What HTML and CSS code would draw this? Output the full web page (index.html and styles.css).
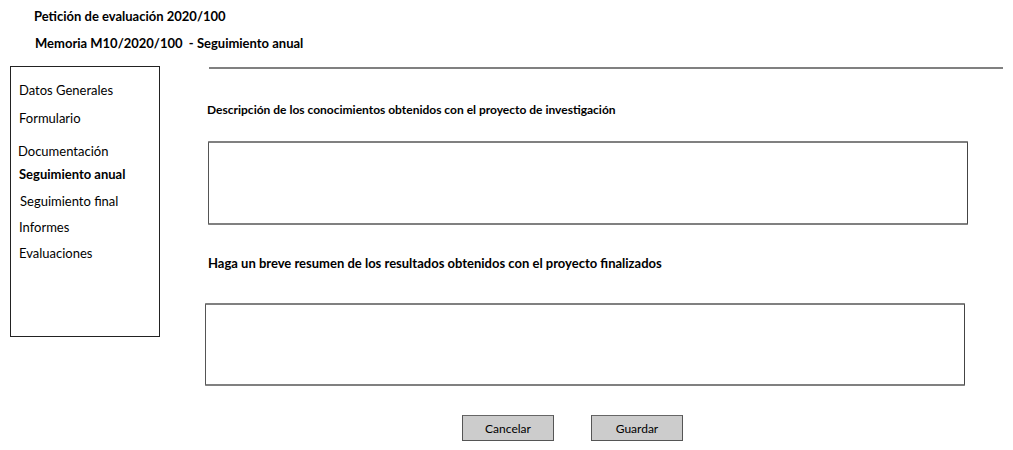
FILE: index.html
```html
<!DOCTYPE html>
<html lang="es">
<head>
<meta charset="utf-8">
<link rel="stylesheet" href="styles.css">
</head>
<body>
<header class="header">
  <div class="title-1">Petición de evaluación 2020/100</div>
  <div class="title-2">Memoria M10/2020/100&nbsp; - Seguimiento anual</div>
</header>
<div class="layout">
  <nav class="sidebar">
    <div class="nav-item nav-datos">Datos Generales</div>
    <div class="nav-item nav-form">Formulario</div>
    <div class="nav-item nav-doc">Documentación</div>
    <div class="nav-item nav-active">Seguimiento anual</div>
    <div class="nav-item nav-final">Seguimiento final</div>
    <div class="nav-item nav-inf">Informes</div>
    <div class="nav-item nav-eval">Evaluaciones</div>
  </nav>
  <main class="main">
    <div class="divider"></div>
    <div class="label label-1">Descripción de los conocimientos obtenidos con el proyecto de investigación</div>
    <div class="textbox textbox-1"></div>
    <div class="label label-2">Haga un breve resumen de los resultados obtenidos con el proyecto finalizados</div>
    <div class="textbox textbox-2"></div>
    <div class="actions">
      <button class="btn">Cancelar</button>
      <button class="btn">Guardar</button>
    </div>
  </main>
</div>
</body>
</html>
```
FILE: styles.css
```css
html, body {
  margin: 0;
  padding: 0;
  background: #ffffff;
}
body {
  font-family: Lato, "Open Sans", sans-serif;
  color: #000;
  width: 1013px;
  height: 450px;
  overflow: hidden;
}
.header {
  padding: 8px 0 0 34px;
}
.title-1 {
  font-size: 13px;
  font-weight: bold;
  line-height: 16px;
}
.title-2 {
  font-size: 13px;
  font-weight: bold;
  line-height: 16px;
  margin-top: 11px;
  margin-left: 1px;
}
.layout {
  display: flex;
  margin-top: 15px;
}
.sidebar {
  box-sizing: border-box;
  width: 150px;
  height: 271px;
  margin-left: 10px;
  border: 1px solid #222;
  border-width: 1px 1.5px 1.5px 1px;
  padding-top: 15px;
}
.nav-item {
  font-size: 13px;
  line-height: 16px;
  margin-left: 8px;
}
.nav-form { margin-top: 12px; }
.nav-doc { margin-top: 17px; margin-left: 7px; }
.nav-active { margin-top: 7px; font-weight: bold; }
.nav-final { margin-top: 11px; margin-left: 9px; }
.nav-inf { margin-top: 10px; }
.nav-eval { margin-top: 10px; }
.main {
  flex: 1;
  padding-left: 45px;
}
.divider {
  height: 2px;
  background: #808080;
  margin-left: 4px;
  margin-right: 10px;
  margin-top: 1px;
}
.label {
  font-weight: bold;
  line-height: 16px;
}
.label-1 {
  font-size: 12px;
  margin-top: 33px;
  margin-left: 2px;
}
.textbox {
  box-sizing: border-box;
  width: 760px;
  height: 84px;
  border: 2px solid #808080;
  border-left: 1.5px solid #555;
  border-right: 1.5px solid #444;
  border-radius: 1px;
}
.textbox-1 {
  margin-top: 23px;
  margin-left: 3px;
}
.label-2 {
  font-size: 13px;
  margin-top: 30px;
  margin-left: 3px;
}
.textbox-2 {
  margin-top: 32px;
  height: 83px;
  margin-left: 0;
}
.actions {
  display: flex;
  gap: 37px;
  margin-top: 29px;
  margin-left: 257px;
}
.btn {
  box-sizing: border-box;
  width: 92px;
  height: 26px;
  background: #cccccc;
  border: 1.5px solid #555;
  border-top-color: #666;
  font-family: Lato, "Open Sans", sans-serif;
  font-size: 12px;
  color: #000;
  padding: 0;
}
```
